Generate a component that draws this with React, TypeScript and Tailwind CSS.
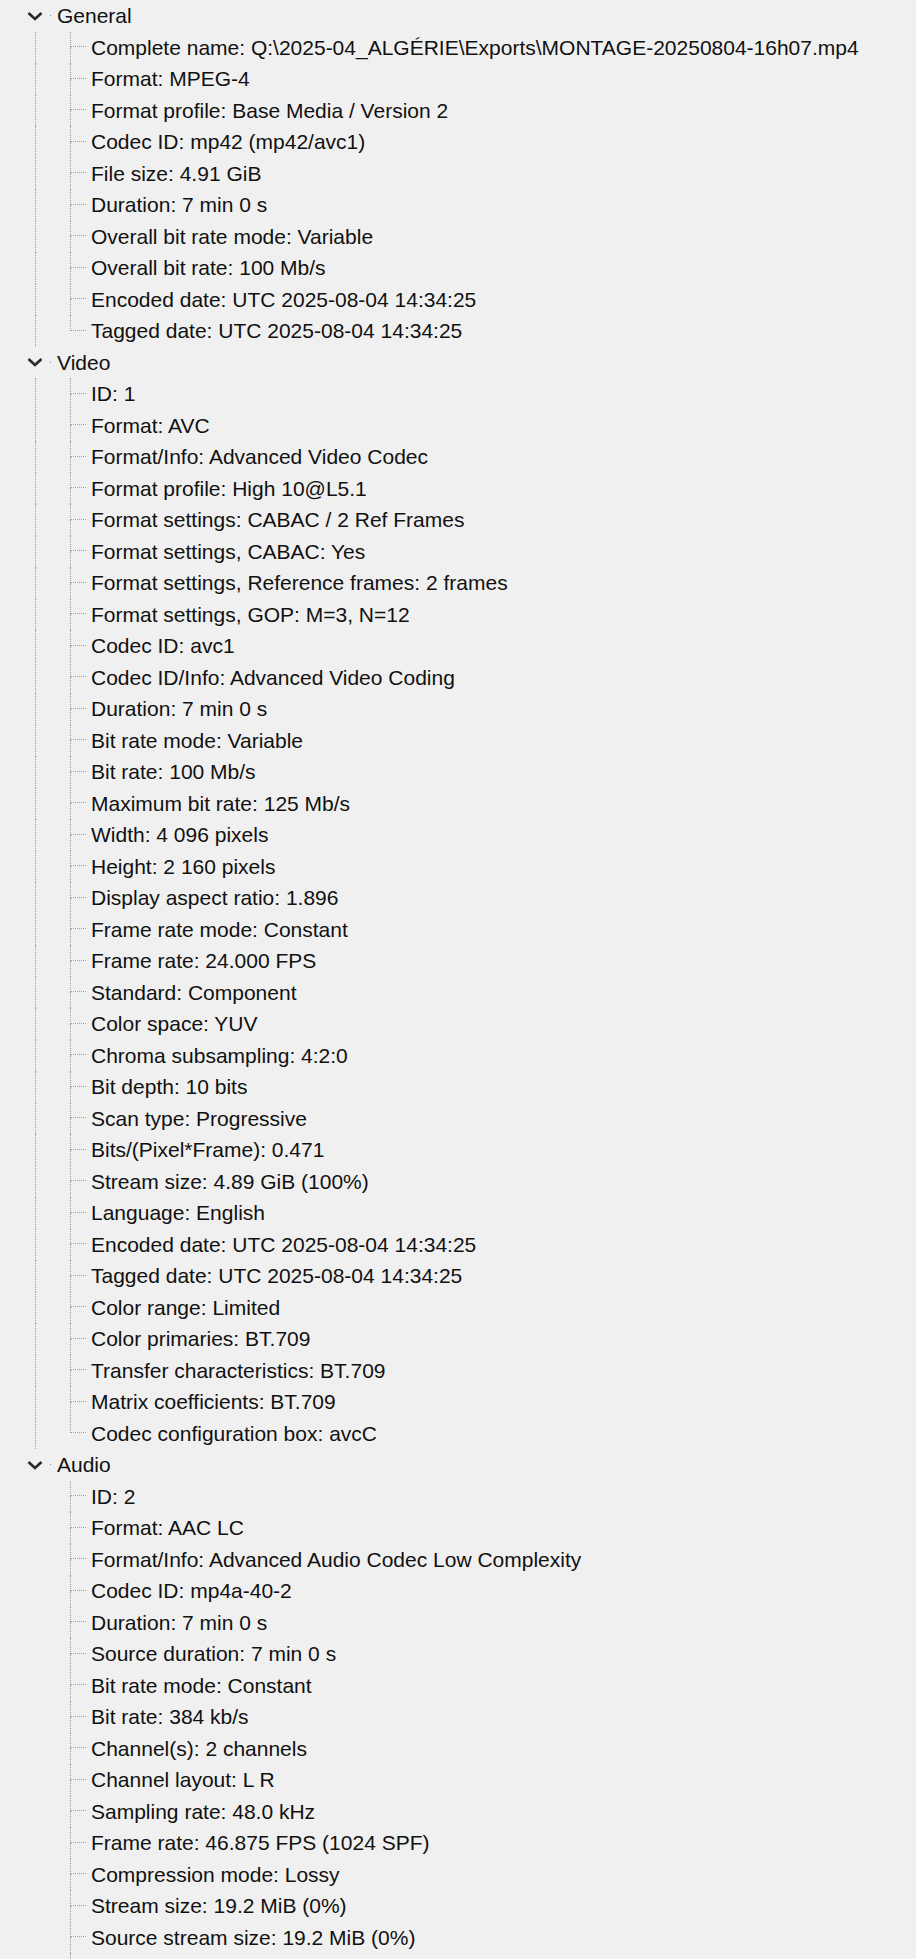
import React from "react";

type Group = { title: string; items: string[] };

const groups: Group[] = [
  {
    title: "General",
    items: [
      "Complete name: Q:\\2025-04_ALGÉRIE\\Exports\\MONTAGE-20250804-16h07.mp4",
      "Format: MPEG-4",
      "Format profile: Base Media / Version 2",
      "Codec ID: mp42 (mp42/avc1)",
      "File size: 4.91 GiB",
      "Duration: 7 min 0 s",
      "Overall bit rate mode: Variable",
      "Overall bit rate: 100 Mb/s",
      "Encoded date: UTC 2025-08-04 14:34:25",
      "Tagged date: UTC 2025-08-04 14:34:25",
    ],
  },
  {
    title: "Video",
    items: [
      "ID: 1",
      "Format: AVC",
      "Format/Info: Advanced Video Codec",
      "Format profile: High 10@L5.1",
      "Format settings: CABAC / 2 Ref Frames",
      "Format settings, CABAC: Yes",
      "Format settings, Reference frames: 2 frames",
      "Format settings, GOP: M=3, N=12",
      "Codec ID: avc1",
      "Codec ID/Info: Advanced Video Coding",
      "Duration: 7 min 0 s",
      "Bit rate mode: Variable",
      "Bit rate: 100 Mb/s",
      "Maximum bit rate: 125 Mb/s",
      "Width: 4 096 pixels",
      "Height: 2 160 pixels",
      "Display aspect ratio: 1.896",
      "Frame rate mode: Constant",
      "Frame rate: 24.000 FPS",
      "Standard: Component",
      "Color space: YUV",
      "Chroma subsampling: 4:2:0",
      "Bit depth: 10 bits",
      "Scan type: Progressive",
      "Bits/(Pixel*Frame): 0.471",
      "Stream size: 4.89 GiB (100%)",
      "Language: English",
      "Encoded date: UTC 2025-08-04 14:34:25",
      "Tagged date: UTC 2025-08-04 14:34:25",
      "Color range: Limited",
      "Color primaries: BT.709",
      "Transfer characteristics: BT.709",
      "Matrix coefficients: BT.709",
      "Codec configuration box: avcC",
    ],
  },
  {
    title: "Audio",
    items: [
      "ID: 2",
      "Format: AAC LC",
      "Format/Info: Advanced Audio Codec Low Complexity",
      "Codec ID: mp4a-40-2",
      "Duration: 7 min 0 s",
      "Source duration: 7 min 0 s",
      "Bit rate mode: Constant",
      "Bit rate: 384 kb/s",
      "Channel(s): 2 channels",
      "Channel layout: L R",
      "Sampling rate: 48.0 kHz",
      "Frame rate: 46.875 FPS (1024 SPF)",
      "Compression mode: Lossy",
      "Stream size: 19.2 MiB (0%)",
      "Source stream size: 19.2 MiB (0%)",
    ],
  },
];

function Chevron() {
  return (
    <svg width="16" height="10" viewBox="0 0 16 10" className="shrink-0">
      <polyline
        points="1.5,2 8,8 14.5,2"
        fill="none"
        stroke="#2b2b2b"
        strokeWidth="2.7"
      />
    </svg>
  );
}

function GroupRow({ title }: { title: string }) {
  return (
    <div className="flex h-[31.5px] items-center pl-[27px]">
      <Chevron />
      <span className="ml-[7px] h-px w-px shrink-0 bg-[#8c8c8c]" />
      <span className="ml-[6px] whitespace-nowrap">{title}</span>
    </div>
  );
}

function ItemRow({
  text,
  groupLast,
  itemLast,
}: {
  text: string;
  groupLast: boolean;
  itemLast: boolean;
}) {
  return (
    <div className="flex h-[31.5px]">
      <div className="w-[35px] shrink-0" />
      <div
        className={
          groupLast
            ? "h-full w-[35px] shrink-0"
            : "h-full w-[35px] shrink-0 border-l border-dotted border-[#a0a0a0]"
        }
      />
      <div className="flex h-full w-[16px] shrink-0 flex-col">
        <div className="h-1/2 border-b border-l border-dotted border-[#a0a0a0]" />
        <div
          className={
            itemLast ? "flex-1" : "flex-1 border-l border-dotted border-[#a0a0a0]"
          }
        />
      </div>
      <span className="ml-[5px] self-center whitespace-nowrap">{text}</span>
    </div>
  );
}

export default function App() {
  return (
    <div
      className="flex h-[1959px] w-full flex-col overflow-hidden bg-[#f0f0f0] text-[21px] text-[#111]"
      style={{ fontFamily: '"Liberation Sans", Arial, sans-serif' }}
    >
      {groups.map((g, gi) => {
        const groupLast = gi === groups.length - 1;
        return (
          <div key={g.title}>
            <GroupRow title={g.title} />
            {g.items.map((t, i) => (
              <ItemRow
                key={i}
                text={t}
                groupLast={groupLast}
                itemLast={!groupLast && i === g.items.length - 1}
              />
            ))}
          </div>
        );
      })}
      {/* the Audio list goes on below the fold */}
      <div className="ml-[70px] flex-1 border-l border-dotted border-[#a0a0a0]" />
    </div>
  );
}
